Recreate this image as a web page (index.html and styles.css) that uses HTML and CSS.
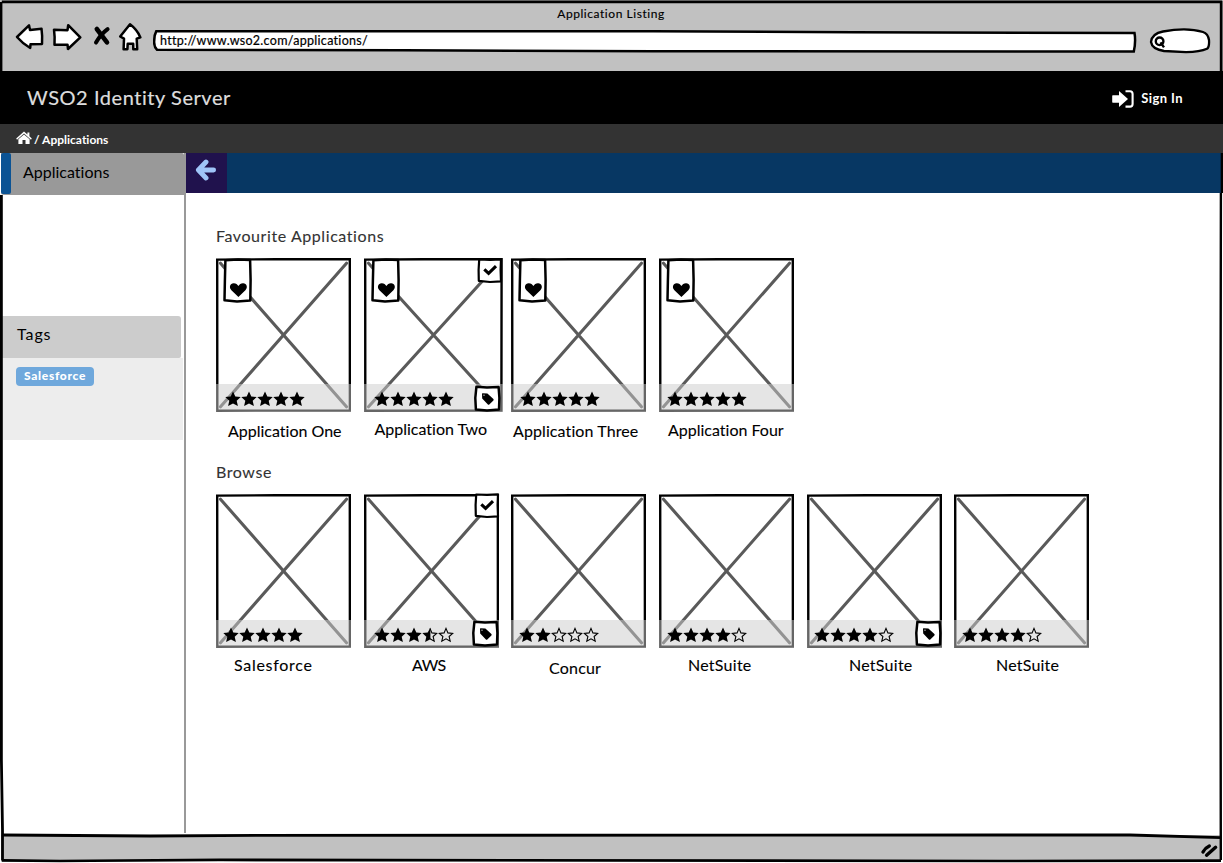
FILE: index.html
```html
<!DOCTYPE html>
<html lang="en">
<head>
<meta charset="utf-8">
<title>Application Listing</title>
<link rel="stylesheet" href="styles.css">
</head>
<body>
<svg class="defs" aria-hidden="true">
  <symbol id="box" viewBox="0 0 135 154">
    <path d="M4.5 5.2 130.5 148.8M130.5 5.2 4.5 148.8" fill="none" stroke="#5a5a5a" stroke-width="3.1" stroke-linecap="round"/>
    <path d="M1.2 1.6 60 1.2 133.8 1.2 133.9 152.6 1.3 152.7Z" fill="none" stroke="#000" stroke-width="2.4"/>
  </symbol>
  <symbol id="box-wide" viewBox="0 0 139 154">
    <path d="M4.5 5.2 134.5 148.8M134.5 5.2 4.5 148.8" fill="none" stroke="#5a5a5a" stroke-width="3.1" stroke-linecap="round"/>
    <path d="M1.2 1.6 60 1.2 137.6 1.2 137.4 152.6 1.3 152.7Z" fill="none" stroke="#000" stroke-width="2.4"/>
  </symbol>
  <symbol id="full" viewBox="0 0 16 16">
    <path d="M8 .4 10.3 5.4 15.7 6 11.7 9.7 12.9 15.1 8 12.5 3.1 15.1 4.3 9.7 .3 6 5.7 5.4Z"/>
  </symbol>
  <symbol id="none" viewBox="0 0 16 16">
    <path d="M8 1.4 9.9 5.9 14.7 6.4 11.1 9.5 12.2 14.2 8 11.8 3.8 14.2 4.9 9.5 1.3 6.4 6.1 5.9Z" fill="none" stroke="#000" stroke-width="1.1"/>
  </symbol>
  <symbol id="half" viewBox="0 0 16 16">
    <path d="M8 1.4 9.9 5.9 14.7 6.4 11.1 9.5 12.2 14.2 8 11.8" fill="none" stroke="#000" stroke-width="1.1"/>
    <path d="M8.4 .4V12.3L3.1 15.1 4.3 9.7 .3 6 5.7 5.4Z"/>
  </symbol>
  <symbol id="fav" viewBox="0 0 30 46">
    <path d="M2.4 2.2 15 1.6 27.1 2 27.6 22 27.3 42.6 14 43.4 1.5 42.3 1.9 22Z" fill="#fff" stroke="#000" stroke-width="2.5" stroke-linejoin="round"/>
    <path d="M15.4 39 8.4 32.2C5.7 29.2 7 25.4 10.6 25.2 12.8 25.1 14.4 26.2 15.4 28 16.4 26.2 18 25.1 20.2 25.2 23.8 25.4 25.1 29.2 22.4 32.2Z"/>
  </symbol>
  <symbol id="check" viewBox="0 0 26 26">
    <path d="M2.2 1.5 13 1.9 24 1.4 23.6 12 24 23.4 13 24 1.8 22.8 1.6 12Z" fill="#fff" stroke="#000" stroke-width="2.2" stroke-linejoin="round"/>
    <path d="M7.3 11.4 11.6 15.4 19 8.2" fill="none" stroke="#000" stroke-width="3.1"/>
  </symbol>
  <symbol id="tag" viewBox="0 0 27 27">
    <path d="M2.4 1.8 13 2.5 24.6 2 25.4 13 25 24.5 13 25.4 1.9 24.6 1.3 13Z" fill="#fff" stroke="#000" stroke-width="2.5" stroke-linejoin="round"/>
    <path fill-rule="evenodd" d="M8 8.8Q8 8.2 8.6 8.2L13.4 8.4 19.4 14Q20 14.8 19.4 15.4L15.3 19.4Q14.6 20 13.9 19.4L8.2 13.6ZM9.4 10.2a.6.6 0 1 0 1.2 0 .6.6 0 1 0-1.2 0Z"/>
  </symbol>
</svg>

<div class="window">
  <header class="chrome">
    <div class="window-title"><span>Application Listing</span></div>
    <div class="controls">
      <svg class="nav" width="130" height="34" viewBox="14 20 130 34" fill="#fff" stroke="#000" stroke-width="2.5" stroke-linejoin="round">
        <path d="M17 37 29 25.3 30 30 41.5 28.7Q42.5 36 42 44L30.5 44.3 30.2 48Q23 44 17 37Z"/>
        <path d="M54 29.7 67.5 30.2 68.2 25.2 80.3 37.3 68 49 67.5 44.7 54.5 44.8Q55 37 54 29.7Z"/>
        <path d="M96.8 29 107 42.4" fill="none" stroke-width="4.6" stroke-linecap="round"/>
        <path d="M107.6 29.2Q101 34 96 42.6" fill="none" stroke-width="4" stroke-linecap="round"/>
        <path d="M130 24.3 120.2 36.5 124 38.6 123.6 49.3 127.4 49.2 127.7 43.8 133.2 43.8 133.3 49.2 137.2 49.2 136.7 38.6 140.4 37.4Q137 29.5 130 24.3Z"/>
      </svg>
      <div class="address">
        <svg class="address-shape" viewBox="0 0 984 24" width="984" height="24"><path d="M3.2 2.3 500 2.3 700 3.3 981.5 4Q983 12.5 980.8 22.5L500 22.3 250 21.3 4 20.8Q.8 18 1.2 12 1.2 6 3.2 2.3Z" fill="#fff" stroke="#000" stroke-width="2.5"/></svg>
        <span class="url">http://www.wso2.com/applications/</span>
      </div>
      <svg class="search" width="62" height="28" viewBox="1149 28 62 28"><path d="M1163 31.5Q1187 27 1203 32 1208 33.5 1209 40 1209.5 47 1207 48.8 1200 52 1186 52.2L1164 51Q1152 49 1151 42 1152 33.5 1163 31.5Z" fill="#fff" stroke="#000" stroke-width="2.3"/><circle cx="1159.6" cy="41.3" r="3.8" fill="none" stroke="#000" stroke-width="2.4"/><path d="M1160.5 42.4 1164 47.4" stroke="#000" stroke-width="2.4"/></svg>
    </div>
  </header>

  <div class="topbar">
    <h1 class="brand">WSO2 Identity Server</h1>
    <a class="signin">
      <svg width="22" height="18" viewBox="0 0 22 18" fill="#fff"><path d="M.8 5.2H7V1L16 9 7 17V12.8H.8Q.2 12.8.2 12V6Q.2 5.2.8 5.2Z"/><path d="M13.5 1.2H18Q20.6 1.2 20.6 4V14Q20.6 16.6 18 16.6H13.5" fill="none" stroke="#fff" stroke-width="2.1"/></svg>
      <span>Sign In</span>
    </a>
  </div>

  <nav class="breadcrumb">
    <svg width="16" height="14" viewBox="0 0 16 14" fill="#fff"><path d="M8 .4 11.4 3.5V1.4H13.4V5.3L15.8 7.5 15 8.7 8 2.6 1 8.7.2 7.5Z"/><path d="M8 3.4 13.6 8.3V13.1H9.5V9H6.5V13.1H2.4V8.3Z"/></svg>
    <span>/ Applications</span>
  </nav>

  <div class="body">
    <aside class="sidebar">
      <div class="side-active"><span class="marker"></span><span class="side-label">Applications</span></div>
      <div class="side-space"></div>
      <div class="tags-head"><span>Tags</span></div>
      <div class="tags-panel"><span class="pill">Salesforce</span></div>
    </aside>
    <main class="main">
      <div class="toolbar">
        <div class="back"><svg width="22" height="22" viewBox="0 0 22 22"><path d="M3.5 11H18.6M11 3 3.4 11 11 19" fill="none" stroke="#9fc5f8" stroke-width="4.9" stroke-linecap="round" stroke-linejoin="round"/></svg></div>
      </div>
      <section class="content">
        <h2 class="heading fav-heading">Favourite Applications</h2>
        <div class="grid">
          <article class="card one">
            <div class="thumb"><svg class="box"><use href="#box"/></svg><div class="strip"><svg><use href="#full"/></svg><svg><use href="#full"/></svg><svg><use href="#full"/></svg><svg><use href="#full"/></svg><svg><use href="#full"/></svg></div><svg class="fav"><use href="#fav"/></svg></div>
            <span class="name">Application One</span>
          </article>
          <article class="card two">
            <div class="thumb wide"><svg class="box"><use href="#box-wide"/></svg><div class="strip"><svg><use href="#full"/></svg><svg><use href="#full"/></svg><svg><use href="#full"/></svg><svg><use href="#full"/></svg><svg><use href="#full"/></svg></div><svg class="fav"><use href="#fav"/></svg><svg class="check"><use href="#check"/></svg><svg class="tag"><use href="#tag"/></svg></div>
            <span class="name">Application Two</span>
          </article>
          <article class="card three">
            <div class="thumb"><svg class="box"><use href="#box"/></svg><div class="strip"><svg><use href="#full"/></svg><svg><use href="#full"/></svg><svg><use href="#full"/></svg><svg><use href="#full"/></svg><svg><use href="#full"/></svg></div><svg class="fav"><use href="#fav"/></svg></div>
            <span class="name">Application Three</span>
          </article>
          <article class="card four">
            <div class="thumb"><svg class="box"><use href="#box"/></svg><div class="strip"><svg><use href="#full"/></svg><svg><use href="#full"/></svg><svg><use href="#full"/></svg><svg><use href="#full"/></svg><svg><use href="#full"/></svg></div><svg class="fav"><use href="#fav"/></svg></div>
            <span class="name">Application Four</span>
          </article>
        </div>
        <h2 class="heading browse-heading">Browse</h2>
        <div class="grid">
          <article class="card salesforce">
            <div class="thumb"><svg class="box"><use href="#box"/></svg><div class="strip"><svg><use href="#full"/></svg><svg><use href="#full"/></svg><svg><use href="#full"/></svg><svg><use href="#full"/></svg><svg><use href="#full"/></svg></div></div>
            <span class="name">Salesforce</span>
          </article>
          <article class="card aws">
            <div class="thumb"><svg class="box"><use href="#box"/></svg><div class="strip"><svg><use href="#full"/></svg><svg><use href="#full"/></svg><svg><use href="#full"/></svg><svg><use href="#half"/></svg><svg><use href="#none"/></svg></div><svg class="check"><use href="#check"/></svg><svg class="tag"><use href="#tag"/></svg></div>
            <span class="name">AWS</span>
          </article>
          <article class="card concur">
            <div class="thumb"><svg class="box"><use href="#box"/></svg><div class="strip"><svg><use href="#full"/></svg><svg><use href="#full"/></svg><svg><use href="#none"/></svg><svg><use href="#none"/></svg><svg><use href="#none"/></svg></div></div>
            <span class="name">Concur</span>
          </article>
          <article class="card netsuite-a">
            <div class="thumb"><svg class="box"><use href="#box"/></svg><div class="strip"><svg><use href="#full"/></svg><svg><use href="#full"/></svg><svg><use href="#full"/></svg><svg><use href="#full"/></svg><svg><use href="#none"/></svg></div></div>
            <span class="name">NetSuite</span>
          </article>
          <article class="card netsuite-b">
            <div class="thumb"><svg class="box"><use href="#box"/></svg><div class="strip"><svg><use href="#full"/></svg><svg><use href="#full"/></svg><svg><use href="#full"/></svg><svg><use href="#full"/></svg><svg><use href="#none"/></svg></div><svg class="tag"><use href="#tag"/></svg></div>
            <span class="name">NetSuite</span>
          </article>
          <article class="card netsuite-c">
            <div class="thumb"><svg class="box"><use href="#box"/></svg><div class="strip"><svg><use href="#full"/></svg><svg><use href="#full"/></svg><svg><use href="#full"/></svg><svg><use href="#full"/></svg><svg><use href="#none"/></svg></div></div>
            <span class="name">NetSuite</span>
          </article>
        </div>
      </section>
    </main>
  </div>
  <footer class="statusbar"></footer>

  <!-- Hand-drawn window outline over the content edges -->
  <svg class="outline" width="1223" height="863" viewBox="0 0 1223 863" fill="none" stroke="#000">
    <path d="M1.8 1.8H1221.2V72" stroke-width="2.8"/>
    <path d="M1 2V124" stroke-width="2.8"/>
    <path d="M1.4 195V760L2.5 830V860.5" stroke-width="2.8"/>
    <path d="M1221.9 153V193M1220.9 193 1220.4 500 1220.8 860" stroke-width="2.4"/>
    <path d="M2.5 835 150 836 260 835.4 1000 835 1130 835 1221 837.7" stroke-width="2.8"/>
    <path d="M2 860.4 60 861 220 859.8 1000 861 1221 860.6" stroke-width="2.6"/>
    <path d="M1203 852Q1205 848 1209.3 846M1206.6 855.2 1215.6 847.3" stroke-width="3.4" stroke-linecap="round"/>
  </svg>
</div>
</body>
</html>
```
FILE: styles.css
```css
* { box-sizing: border-box; }
body { margin: 0; background: #fff; color: #000; font-family: Lato, "Open Sans", sans-serif; font-size: 16px; font-variant-ligatures: none; overflow: hidden; }
svg { display: block; flex: none; }
.defs { position: absolute; width: 0; height: 0; }
span, h1, h2 { white-space: nowrap; }
.window { position: relative; width: 1223px; height: 863px; display: flex; flex-direction: column; }
.outline { position: absolute; inset: 0; pointer-events: none; }

.chrome { height: 71px; background: #c1c1c1; margin-right: 1px; }
.window-title { height: 20px; padding-top: 5px; text-align: center; font-size: 12px; line-height: 17px; letter-spacing: .55px; -webkit-text-stroke: .15px #000; }
.controls { display: flex; padding-left: 14px; }
.address { position: relative; width: 984px; height: 24px; margin: 9px 0 0 9px; display: flex; align-items: center; }
.address-shape { position: absolute; inset: 0; }
.url { position: relative; padding-left: 7px; padding-bottom: 1px; font-size: 12.5px; letter-spacing: .3px; line-height: 16px; -webkit-text-stroke: .2px #000; }
.search { margin: 8px 0 0 12px; }

.topbar { height: 53px; background: #000; display: flex; justify-content: space-between; padding: 0 40px 0 27px; color: #ddd; }
.brand { margin: 0; font-size: 20px; font-weight: 400; line-height: 53px; letter-spacing: .55px; -webkit-text-stroke: .2px #ddd; }
.signin { display: flex; align-items: center; gap: 7px; height: 56px; color: #fff; font-size: 13px; font-weight: 700; letter-spacing: .4px; }
.signin span { padding-bottom: 2px; }

.breadcrumb { height: 29px; background: #333; color: #fff; display: flex; gap: 2px; padding: 7px 0 0 16px; font-size: 12px; font-weight: 700; line-height: 18px; }

.body { flex: 1; display: flex; padding-left: 1px; }
.sidebar { width: 185px; border-right: 2px solid #999; display: flex; flex-direction: column; padding-right: 1px; height: 680px; }
.side-active { height: 42px; display: flex; background: #999; margin-right: -1px; border-radius: 0 2px 0 3px; }
.marker { width: 10px; height: 41px; background: #0b5394; border-radius: 2px; }
.side-label { padding-left: 12px; line-height: 38px; }
.side-space { height: 121px; }
.tags-head { height: 42px; margin: 0 2px 0 1px; background: #ccc; border-radius: 0 3px 2px 0; padding-left: 15px; line-height: 36px; letter-spacing: .9px; }
.tags-panel { height: 82px; margin-left: 1px; background: #ededed; padding: 9px 0 0 14px; }
.pill { display: block; width: 78px; height: 19px; border-radius: 4px; background: #6fa8dc; color: #fff; text-align: center; font-size: 12px; font-weight: 900; line-height: 18px; letter-spacing: .7px; }

.main { flex: 1; }
.toolbar { height: 40px; background: #073763; margin-right: 2px; }
.back { width: 41px; height: 40px; background: #20124d; padding: 6px 0 0 9px; }
.content { padding-left: 30px; }
.heading { margin: 0; color: #333; font-size: 16px; font-weight: 400; line-height: 20px; letter-spacing: .58px; -webkit-text-stroke: .1px #333; }
.fav-heading { padding-top: 33px; height: 65px; }
.browse-heading { padding-top: 9px; height: 41px; }
.grid { display: grid; grid-template-columns: 148px 147px 148px 148px 147px 135px; height: 195px; }
.thumb { position: relative; width: 135px; height: 154px; display: flex; flex-direction: column; justify-content: flex-end; }
.thumb.wide { width: 139px; }
.box { position: absolute; top: 0; left: 0; width: 135px; height: 154px; }
.wide .box { width: 139px; }
.strip { position: relative; height: 28px; background: rgba(204, 204, 204, .5); display: flex; padding: 7px 0 0 9px; }
.strip svg { width: 16px; height: 16px; }
.fav { position: absolute; left: 6.5px; top: 0; width: 30px; height: 46px; }
.check { position: absolute; right: 0; top: 0; width: 26px; height: 26px; }
.tag { position: absolute; right: 0; bottom: 0; width: 27px; height: 27px; }
.wide .tag { right: 2.5px; }
.name { display: block; line-height: 20px; padding-top: 9px; -webkit-text-stroke: .1px #000; }

.one .name { padding-left: 12px; }
.two .strip { padding-left: 10px; }
.two .fav { left: 7px; }
.two .name { padding: 7px 0 0 10.5px; }
.three .name { padding-left: 2px; letter-spacing: .1px; }
.four .strip { padding-left: 8px; }
.four .name { padding: 8px 0 0 9px; }
.salesforce .strip { padding-left: 7px; }
.salesforce .name { padding: 7px 0 0 18px; letter-spacing: .7px; }
.aws .strip { padding-left: 10px; }
.aws .name { padding: 7px 0 0 48px; letter-spacing: -.5px; }
.aws .check { right: -1px; top: -1px; }
.aws .tag, .netsuite-b .tag { bottom: 1px; }
.concur .strip { padding-left: 8px; }
.concur .name { padding: 10px 0 0 38px; letter-spacing: .2px; }
.netsuite-a .strip { padding-left: 8px; }
.netsuite-a .name { padding: 7px 0 0 29px; letter-spacing: .25px; }
.netsuite-b .strip { padding-left: 7px; }
.netsuite-b .name { padding: 7px 0 0 42px; letter-spacing: .25px; }
.netsuite-c .strip { padding-left: 8px; }
.netsuite-c .name { padding: 7px 0 0 42px; letter-spacing: .2px; }

.statusbar { height: 28px; background: #c1c1c1; margin: 0 2px 0 1px; border-bottom: 1px solid #fff; }
```
